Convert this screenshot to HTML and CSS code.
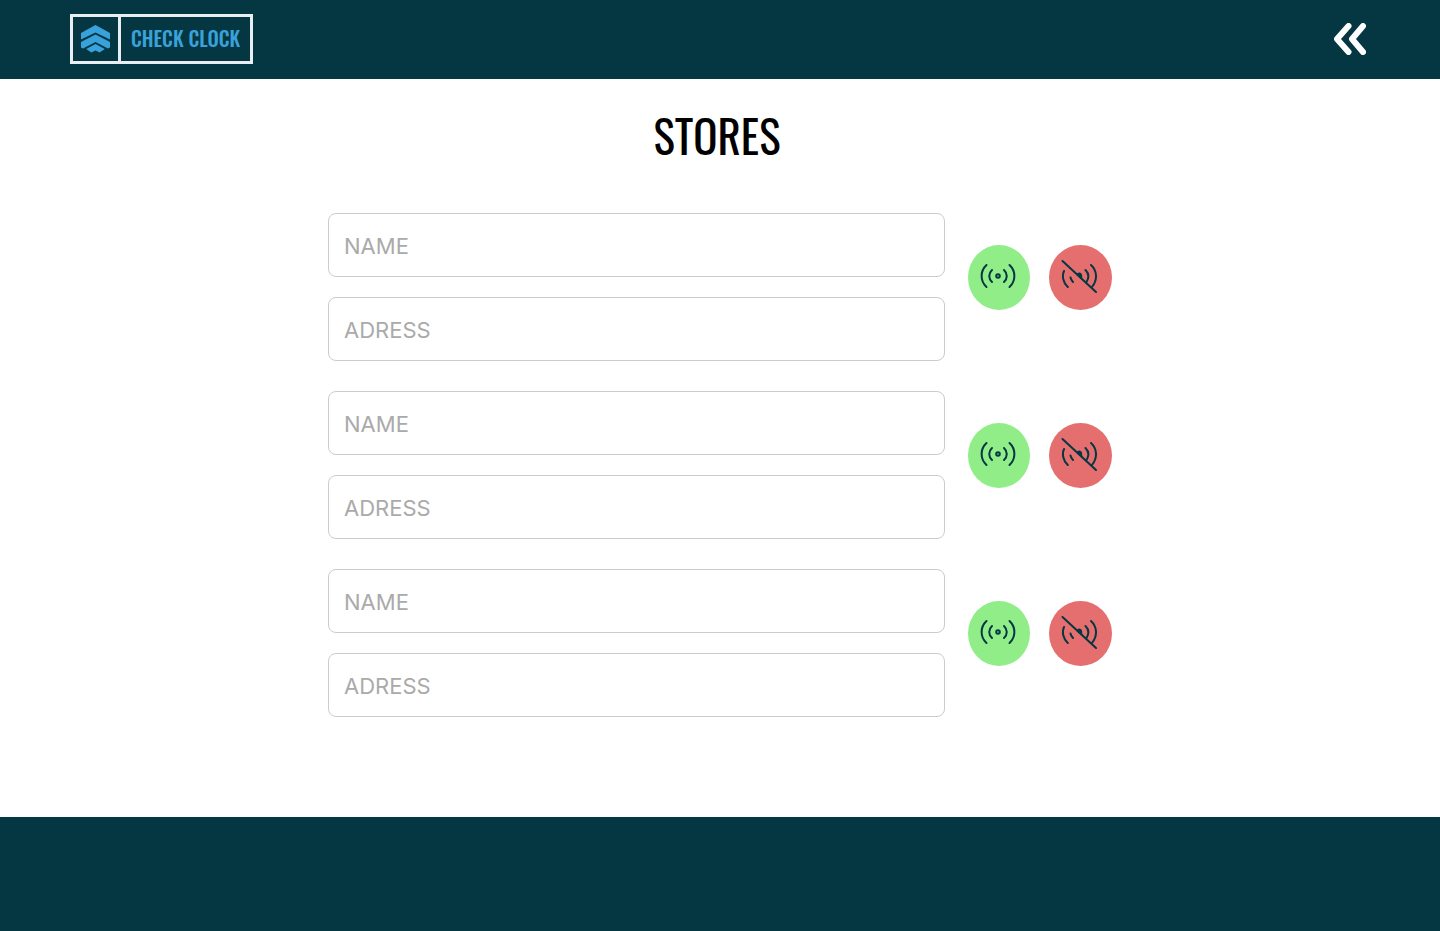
FILE: index.html
```html
<!DOCTYPE html>
<html lang="en">
<head>
<meta charset="utf-8">
<meta name="viewport" content="width=device-width, initial-scale=1">
<title>Check Clock</title>
<link rel="stylesheet" href="styles.css">
</head>
<body>
<svg class="symbols" aria-hidden="true">
  <symbol id="signal-on" viewBox="0 0 36 32">
    <circle cx="18" cy="16" r="1.8"/>
    <path d="M6.500 5C0 11 0 21 6.500 27M29.500 5C36 11 36 21 29.500 27M12 10C8.300 13.500 8.300 18.500 12 22M24 10C27.700 13.500 27.700 18.500 24 22"/>
  </symbol>
  <symbol id="signal-off" viewBox="0 0 36 34">
    <path d="M1.500 2L35 33M3 12C.8 17 2 23.500 6.800 28M9.500 18.500Q10 21 12 23M30 6C36.500 12 36.500 21 31 28M24.500 11C28 14.500 28 19 25.500 23"/>
    <path class="dot" d="M16.500 15.500C17.500 13.800 20 14 20.200 16.500V19Z"/>
  </symbol>
</svg>
<header class="topbar">
  <a class="logo" href="#" aria-label="Check Clock">
    <span class="logo-mark">
      <svg width="29" height="28" viewBox="0 0 28 28" preserveAspectRatio="none" aria-hidden="true">
        <path d="M14 0L28 8V14.500L14 7.500L0 14.500V8ZM14 9.500L28 17V22.500L26 23.500L14 17L2 23.500L0 22.500V17ZM14 19L23 24L18 27.500L14 25.500L10 27.500L5 24Z"/>
      </svg>
    </span>
    <span class="logo-text">CHECK CLOCK</span>
  </a>
  <button class="back" type="button" aria-label="Back">
    <svg width="32" height="32" viewBox="0 0 32 32" aria-hidden="true"><path d="M14.500 3L3 16L14.500 29M29 3L18 16L29 29"/></svg>
  </button>
</header>
<main class="content">
  <h1 class="title">STORES</h1>
  <form class="stores">
    <div class="store">
      <div class="fields">
        <input class="field" type="text" placeholder="NAME" aria-label="Store 1 name">
        <input class="field" type="text" placeholder="ADRESS" aria-label="Store 1 address">
      </div>
      <div class="actions">
        <button class="action on" type="button" aria-label="Enable store 1"><svg width="36" height="32"><use href="#signal-on"/></svg></button>
        <button class="action off" type="button" aria-label="Disable store 1"><svg width="36" height="34"><use href="#signal-off"/></svg></button>
      </div>
    </div>
    <div class="store">
      <div class="fields">
        <input class="field" type="text" placeholder="NAME" aria-label="Store 2 name">
        <input class="field" type="text" placeholder="ADRESS" aria-label="Store 2 address">
      </div>
      <div class="actions">
        <button class="action on" type="button" aria-label="Enable store 2"><svg width="36" height="32"><use href="#signal-on"/></svg></button>
        <button class="action off" type="button" aria-label="Disable store 2"><svg width="36" height="34"><use href="#signal-off"/></svg></button>
      </div>
    </div>
    <div class="store">
      <div class="fields">
        <input class="field" type="text" placeholder="NAME" aria-label="Store 3 name">
        <input class="field" type="text" placeholder="ADRESS" aria-label="Store 3 address">
      </div>
      <div class="actions">
        <button class="action on" type="button" aria-label="Enable store 3"><svg width="36" height="32"><use href="#signal-on"/></svg></button>
        <button class="action off" type="button" aria-label="Disable store 3"><svg width="36" height="34"><use href="#signal-off"/></svg></button>
      </div>
    </div>
  </form>
</main>
<footer class="footer"></footer>
</body>
</html>
```
FILE: styles.css
```css
* { box-sizing: border-box; }

body {
  margin: 0;
  min-height: 100vh;
  display: flex;
  flex-direction: column;
  background: #fff;
  font-family: Inter, "Liberation Sans", sans-serif;
}

.symbols { display: none; }

.topbar {
  display: flex;
  align-items: center;
  justify-content: space-between;
  padding: 14px 70px 15px;
  background: #053742;
}

.logo {
  display: flex;
  border: 3px solid #e8eef2;
  color: #39a2db;
  font: 500 20px/22px Oswald, "Liberation Sans Narrow", "Liberation Sans", sans-serif;
  text-decoration: none;
}

.logo-mark {
  display: flex;
  padding: 8px;
  border-right: 3px solid #e8eef2;
}

.logo-mark svg { fill: #39a2db; }

.logo-text {
  padding: 10px 10px 12px;
}

.back {
  display: flex;
  padding: 4px;
  border: 0;
  background: none;
  cursor: pointer;
}

.back svg {
  fill: none;
  stroke: #fff;
  stroke-width: 6;
  stroke-linecap: round;
  stroke-linejoin: round;
}

.content {
  flex: 1;
  width: 100%;
  max-width: 784px;
  margin: 0 auto;
  padding-bottom: 100px;
}

.title {
  margin: 0;
  padding: 28px 6px 50px 0;
  font: 400 45px/56px Oswald, "Liberation Sans Narrow", "Liberation Sans", sans-serif;
  text-align: center;
}

.stores {
  display: grid;
  gap: 30px;
}

.store {
  display: flex;
  gap: 23px;
}

.fields {
  flex: 1;
  display: grid;
  gap: 20px;
}

.field {
  width: 100%;
  height: 64px;
  padding: 1px 15px 0;
  border: 1px solid #ccc;
  border-radius: 8px;
  background: #fff;
  font: 22px Inter, "Liberation Sans", sans-serif;
}

.field::placeholder {
  color: #aaa;
  opacity: 1;
}

.actions {
  display: flex;
  align-items: flex-start;
  gap: 19px;
  padding-top: 32px;
}

.action {
  display: flex;
  align-items: center;
  justify-content: center;
  width: 63px;
  height: 65px;
  padding: 0 3px 3px 0;
  border: 0;
  border-radius: 50%;
  cursor: pointer;
}

.on {
  width: 62px;
  background: #90ed88;
}

.off { background: #e56f6f; }

.action svg {
  fill: none;
  stroke: #053742;
  stroke-width: 2;
  stroke-linecap: round;
}

.dot { fill: #053742; }

.footer {
  min-height: 114px;
  background: #053742;
}
```
